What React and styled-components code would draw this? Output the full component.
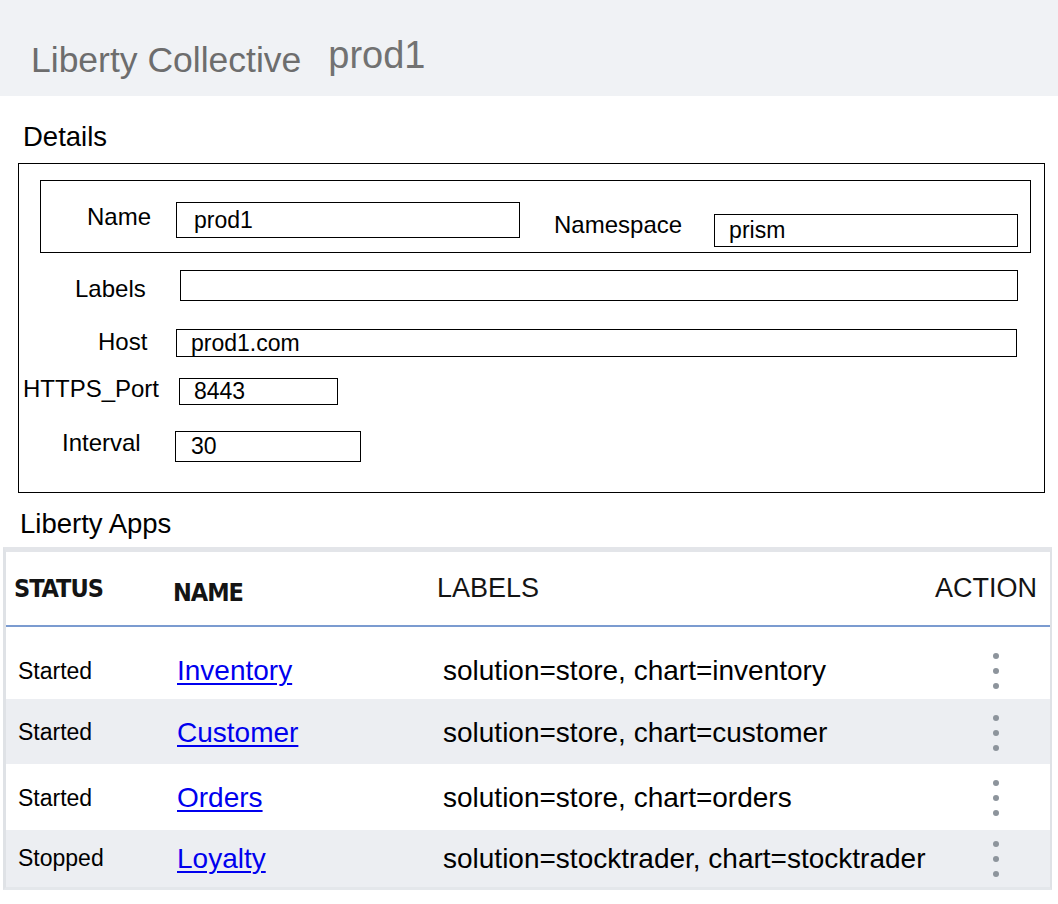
import React from "react";
import styled, { createGlobalStyle } from "styled-components";

const apps = [
  { status: "Started", name: "Inventory", labels: "solution=store, chart=inventory", height: 72, lift: 16 },
  { status: "Started", name: "Customer", labels: "solution=store, chart=customer", height: 65, shaded: true, lift: 2 },
  { status: "Started", name: "Orders", labels: "solution=store, chart=orders", height: 66, lift: 2 },
  { status: "Stopped", name: "Loyalty", labels: "solution=stocktrader, chart=stocktrader", height: 57, shaded: true },
];

function App() {
  return (
    <Page>
      <GlobalStyle />
      <TopBar>
        <Title>Liberty Collective</Title>
        <Instance>prod1</Instance>
      </TopBar>

      <Section $pl={18}>
        <SectionTitle $pl={5} $mt={26}>Details</SectionTitle>
        <DetailsBox>
          <IdentityBox>
            <Label $ml={46} $mt={22}>Name</Label>
            <Field $ml={25} $mt={21} $w={344} $h={36} $pad={17}>prod1</Field>
            <Label $ml={34} $mt={30}>Namespace</Label>
            <Field $ml={32} $mt={33} $w={304} $h={33} $pad={14}>prism</Field>
          </IdentityBox>

          <FormRow $mt={17}>
            <Label $w={161} $pl={56} $mt={5}>Labels</Label>
            <Field $w={838} $h={31} />
          </FormRow>
          <FormRow $mt={25}>
            <Label $w={157} $pl={79}>Host</Label>
            <Field $mt={1} $w={841} $h={28} $pad={14}>prod1.com</Field>
          </FormRow>
          <FormRow $mt={18}>
            <Label $w={160} $pl={4}>HTTPS_Port</Label>
            <Field $mt={3} $w={159} $h={27} $pad={14}>8443</Field>
          </FormRow>
          <FormRow $mt={24}>
            <Label $w={156} $pl={43}>Interval</Label>
            <Field $mt={2} $w={186} $h={31} $pad={15}>30</Field>
          </FormRow>
        </DetailsBox>
      </Section>

      <Section>
        <SectionTitle $pl={20} $mt={16}>Liberty Apps</SectionTitle>
        <Table>
          <HeadRow>
            <HeadCell $condensed $pl={8}>STATUS</HeadCell>
            <HeadCell $condensed $pt={7}>NAME</HeadCell>
            <HeadCell>LABELS</HeadCell>
            <HeadCell $pl={5}>ACTION</HeadCell>
          </HeadRow>
          {apps.map((app) => (
            <Row key={app.name} $h={app.height} $shaded={app.shaded} $lift={app.lift}>
              <Status>{app.status}</Status>
              <Cell $pl={4}>
                <AppLink href="#">{app.name}</AppLink>
              </Cell>
              <LabelText>{app.labels}</LabelText>
              <Kebab>
                <Dot />
                <Dot />
                <Dot />
              </Kebab>
            </Row>
          ))}
        </Table>
      </Section>
    </Page>
  );
}

export default App;

const GlobalStyle = createGlobalStyle`
  body {
    margin: 0;
    background: #fff;
    color: #000;
    font-family: "Liberation Sans", Arial, Helvetica, sans-serif;
  }
`;

const Page = styled.div`
  width: 1058px;
  min-height: 904px;
  background: #fff;
`;

const TopBar = styled.div`
  height: 96px;
  background: #f0f2f5;
  display: flex;
  align-items: flex-start;
  padding-left: 31px;
  color: #6d6d6d;
  line-height: 1;
`;

const Title = styled.div`
  font-size: 35.5px;
  margin-top: 43px;
`;

const Instance = styled.div`
  font-size: 38px;
  margin-top: 36px;
  margin-left: 27px;
  color: #727272;
`;

const Section = styled.div`
  padding-left: ${({ $pl }) => $pl || 0}px;
`;

const SectionTitle = styled.div`
  font-size: 27.5px;
  line-height: 30px;
  padding-left: ${({ $pl }) => $pl || 0}px;
  margin-top: ${({ $mt }) => $mt || 0}px;
`;

const DetailsBox = styled.div`
  box-sizing: border-box;
  margin-top: 11px;
  width: 1027px;
  height: 330px;
  border: 1px solid #000;
  padding-top: 16px;
`;

const IdentityBox = styled.div`
  box-sizing: border-box;
  margin-left: 21px;
  width: 991px;
  height: 73px;
  border: 1px solid #000;
  display: flex;
  align-items: flex-start;
`;

const FormRow = styled.div`
  display: flex;
  align-items: flex-start;
  margin-top: ${({ $mt }) => $mt || 0}px;
`;

const Label = styled.div`
  box-sizing: border-box;
  flex: none;
  font-size: 24px;
  line-height: 28px;
  white-space: nowrap;
  width: ${({ $w }) => ($w ? `${$w}px` : "auto")};
  padding-left: ${({ $pl }) => $pl || 0}px;
  margin-left: ${({ $ml }) => $ml || 0}px;
  margin-top: ${({ $mt }) => $mt || 0}px;
`;

const Field = styled.div`
  box-sizing: border-box;
  flex: none;
  width: ${({ $w }) => $w}px;
  height: ${({ $h }) => $h}px;
  margin-left: ${({ $ml }) => $ml || 0}px;
  margin-top: ${({ $mt }) => $mt || 0}px;
  padding-left: ${({ $pad }) => $pad || 0}px;
  border: 1px solid #000;
  font-size: 23px;
  line-height: ${({ $h }) => $h - 2}px;
  white-space: nowrap;
`;

const Table = styled.div`
  box-sizing: border-box;
  margin: 8px 0 0 3px;
  width: 1049px;
  border-top: 5px solid #e3e5e9;
  border-left: 3px solid #dfe2e6;
  border-right: 2px solid #dfe2e6;
  border-bottom: 3px solid #e4e7eb;
`;

const columns = "167px 264px 493px 1fr";

const HeadRow = styled.div`
  display: grid;
  grid-template-columns: ${columns};
  align-items: center;
  height: 73px;
  border-bottom: 2px solid #7b9bd0;
`;

const HeadCell = styled.div`
  padding-left: ${({ $pl }) => $pl || 0}px;
  padding-top: ${({ $pt }) => $pt || 0}px;
  color: #141414;
  font-size: 27px;
  ${({ $condensed }) =>
    $condensed &&
    `
    font-family: "Liberation Sans Narrow", "DejaVu Sans Condensed", "Roboto Condensed", Roboto, sans-serif;
    font-size: 25px;
    font-weight: 700;
    letter-spacing: -1px;
  `}
`;

const Row = styled.div`
  display: grid;
  grid-template-columns: ${columns};
  align-items: center;
  height: ${({ $h }) => $h}px;
  box-sizing: border-box;
  padding-top: ${({ $lift }) => $lift || 0}px;
  background: ${({ $shaded }) => ($shaded ? "#eceef2" : "#fff")};
`;

const Cell = styled.div`
  padding-left: ${({ $pl }) => $pl || 0}px;
  white-space: nowrap;
`;

const Status = styled(Cell)`
  padding-left: 12px;
  font-size: 23px;
`;

const AppLink = styled.a`
  font-size: 28px;
  color: #0000ee;
  text-decoration: underline;
  text-decoration-thickness: 2px;
  text-underline-offset: 3px;
`;

const LabelText = styled(Cell)`
  padding-left: 6px;
  font-size: 28px;
`;

const Kebab = styled.div`
  display: flex;
  flex-direction: column;
  gap: 9px;
  padding-left: 63px;
`;

const Dot = styled.span`
  width: 6px;
  height: 6px;
  border-radius: 50%;
  background: #8d949c;
`;
